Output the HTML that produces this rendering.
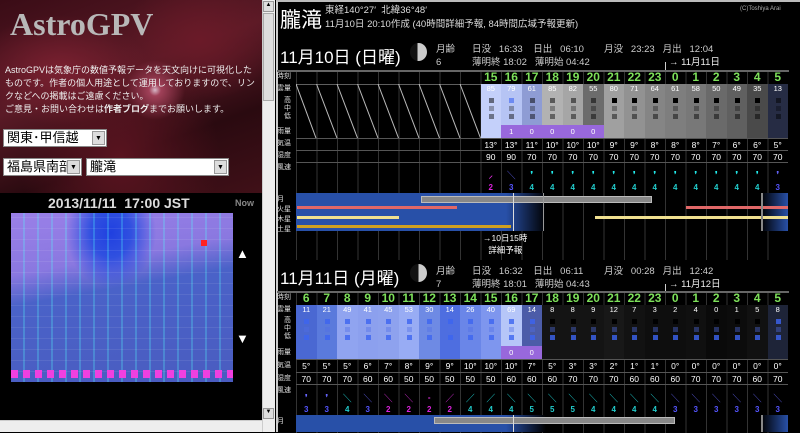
<!DOCTYPE html>
<html><head><meta charset="utf-8"><style>
*{margin:0;padding:0;box-sizing:border-box}
body{width:800px;height:432px;overflow:hidden;background:#000;font-family:"Liberation Sans","Noto Sans CJK JP",sans-serif;position:relative;color:#fff}
.a{position:absolute}
#left{left:0;top:0;width:262px;height:420px;background:#000;overflow:hidden}
#neb{left:0;top:0;width:262px;height:193px;background:radial-gradient(circle at 155px 90px,#d8b8c8 0,#a04058 6px,transparent 30px),radial-gradient(ellipse at 60px 70px,#7a2030 0,transparent 90px),radial-gradient(ellipse at 200px 40px,#6a1a28 0,transparent 80px),radial-gradient(ellipse at 120px 160px,#5a1420 0,transparent 100px),linear-gradient(160deg,#3a0c16,#5a1a26 40%,#2a0a10 70%,#401018)}
.sel{background:#fff;color:#000;font-size:13px;height:18px;border:1px solid #888;line-height:16px;padding-left:3px}
.sel b{position:absolute;right:1px;top:1px;width:13px;height:14px;background:#ddd;border:1px solid #999;font-size:7px;line-height:13px;text-align:center;font-weight:normal}
#right{left:276px;top:0;width:524px;height:432px;background:#000;border-left:2px solid #ccc;border-top:2px solid #bbb}
.lb{font-size:7px;color:#ddd;left:277px;line-height:8px}
.r{position:absolute;left:296px;display:flex}
.r span{width:20.5px;flex:none;text-align:center}
.h{font-size:12px;color:#7de05a;font-weight:bold;height:13px;line-height:13px}
.n{font-size:7.5px;color:#fff;line-height:9px}
.sm{font-size:8.5px;color:#fff}
.grid{left:296px;width:492px;background:repeating-linear-gradient(90deg,#333 0 1px,transparent 1px 20.5px)}
.hl{left:296px;width:492px;height:1px;background:#555}
.cl span{position:relative;height:41px}
.cl span i{position:absolute;left:8px;top:14px;width:5px;height:5px;background:rgba(0,0,0,.5);box-shadow:0 8px 0 rgba(0,0,0,.3),0 16px 0 rgba(0,0,0,.45)}
.bl span i{background:rgba(60,100,240,.8);box-shadow:0 8px 0 rgba(80,110,230,.4),0 16px 0 rgba(60,100,240,.8)}
.w span{height:10px;font-size:8px;font-weight:bold}
.t1{font-size:17px;color:#fff}
.inf{font-size:9.5px;color:#ccc;line-height:13px}
</style></head><body>
<div id="left" class="a">
 <div id="neb" class="a"></div>
 <div class="a" style="left:10px;top:6px;font-family:'Liberation Serif',serif;font-weight:bold;font-size:32px;color:#b8b8b8">AstroGPV</div>
 <div class="a" style="left:5px;top:64px;width:255px;font-size:9px;line-height:13px;color:#eee">AstroGPVは気象庁の数値予報データを天文向けに可視化したものです。作者の個人用途として運用しておりますので、リンクなどへの掲載はご遠慮ください。<br>ご意見・お問い合わせは<b>作者ブログ</b>までお願いします。</div>
 <div class="a sel" style="left:3px;top:129px;width:104px">関東･甲信越<b>▼</b></div>
 <div class="a sel" style="left:3px;top:158px;width:79px">福島県南部<b>▼</b></div>
 <div class="a sel" style="left:86px;top:158px;width:143px">朧滝<b>▼</b></div>
 <div class="a" style="left:0;top:193px;width:262px;height:227px;background:#000"></div>
 <div class="a" style="left:48px;top:195px;font-size:14px;font-weight:bold;color:#ddd">2013/11/11&nbsp; 17:00 JST</div>
 <div class="a" style="left:235px;top:198px;font-size:9px;color:#888;font-weight:bold">Now</div>
 <div class="a" style="left:11px;top:213px;width:222px;height:169px;background:radial-gradient(ellipse at 100px 20px,#2040e0 0,#3050e0 20px,transparent 45px),linear-gradient(170deg,#9a80e8 0,#8a78e0 30%,#4a62c8 45%,#4a5cc0 100%)"></div>
 <div class="a" style="left:11px;top:213px;width:222px;height:169px;background:repeating-linear-gradient(0deg,transparent 0 10px,rgba(255,255,255,.08) 10px 11px),repeating-linear-gradient(90deg,transparent 0 12px,rgba(80,255,255,.25) 12px 14px)"></div>
 <div class="a" style="left:11px;top:370px;width:222px;height:8px;background:repeating-linear-gradient(90deg,#f040e0 0 7px,transparent 7px 12px)"></div>
 <div class="a" style="left:201px;top:240px;width:6px;height:6px;background:#f22"></div>
 <div class="a" style="left:236px;top:246px;font-size:13px;color:#fff">▲</div>
 <div class="a" style="left:236px;top:331px;font-size:13px;color:#fff">▼</div>
</div>
<div class="a" style="left:262px;top:0;width:13px;height:432px;background:#eee;border-left:1px solid #ccc"></div>
<div class="a" style="left:263px;top:1px;width:11px;height:11px;background:#ddd;border:1px solid #999;font-size:6px;text-align:center;color:#000">▲</div>
<div class="a" style="left:263px;top:13px;width:11px;height:88px;background:#ddd;border:1px solid #aaa"></div>
<div class="a" style="left:263px;top:408px;width:11px;height:11px;background:#ddd;border:1px solid #999;font-size:6px;text-align:center;color:#000">▼</div>
<div class="a" style="left:0;top:420px;width:262px;height:12px;background:#eee;border-top:1px solid #ccc"></div>

<div id="right" class="a"></div>
<div class="a" style="left:280px;top:4px;font-size:21px">朧滝</div>
<div class="a inf" style="left:325px;top:4px;color:#ddd">東経140°27′&nbsp; 北緯36°48′</div>
<div class="a inf" style="left:325px;top:18px;color:#ddd">11月10日 20:10作成 (40時間詳細予報, 84時間広域予報更新)</div>
<div class="a" style="left:740px;top:6px;font-size:6px;color:#aaa">(C)Toshiya Arai</div>

<!-- day 1 header -->
<div class="a t1" style="left:280px;top:43px">11月10日 (日曜)</div>
<div class="a" style="left:410px;top:43px;width:17px;height:18px;border-radius:50%;background:linear-gradient(90deg,#111 45%,#ccc 45%)"></div>
<div class="a inf" style="left:436px;top:43px">月齢<br>6</div>
<div class="a inf" style="left:472px;top:43px">日没&nbsp;&nbsp; 16:33&nbsp;&nbsp;&nbsp; 日出&nbsp;&nbsp; 06:10<br>薄明終 18:02&nbsp;&nbsp; 薄明始 04:42</div>
<div class="a inf" style="left:604px;top:43px">月没&nbsp;&nbsp; 23:23&nbsp;&nbsp; 月出&nbsp;&nbsp; 12:04</div>
<div class="a inf" style="left:669px;top:56px;color:#eee">→ 11月11日</div>
<div class="a" style="left:665px;top:62px;width:1px;height:8px;background:#ccc"></div>
<div class="a hl" style="top:70px;left:277px;width:512px;height:2px;background:#666"></div>
<div class="a grid" style="top:72px;height:188px"></div>
<div class="a lb" style="top:73px">時刻</div>
<div class="a lb" style="top:85px">雲量</div>
<div class="a lb" style="top:97px;left:284px">高<br>中<br>低</div>
<div class="a lb" style="top:128px">雨量</div>
<div class="a lb" style="top:140px">気温</div>
<div class="a lb" style="top:152px">湿度</div>
<div class="a lb" style="top:164px">風速</div>
<div class="a lb" style="top:195px;line-height:10px">月<br>火星<br>木星<br>土星</div>
<svg class="a" style="left:296px;top:84px" width="185" height="54"><g stroke="#bbb" stroke-width="1">
<line x1="0" y1="0" x2="20" y2="54"/><line x1="20.5" y1="0" x2="41" y2="54"/><line x1="41" y1="0" x2="61.5" y2="54"/><line x1="61.5" y1="0" x2="82" y2="54"/><line x1="82" y1="0" x2="102.5" y2="54"/><line x1="102.5" y1="0" x2="123" y2="54"/><line x1="123" y1="0" x2="143.5" y2="54"/><line x1="143.5" y1="0" x2="164" y2="54"/><line x1="164" y1="0" x2="184.5" y2="54"/>
<line x1="0" y1="0" x2="185" y2="0"/></g></svg>
<div class="r h" style="top:71px;left:480.5px"><span>15</span><span>16</span><span>17</span><span>18</span><span>19</span><span>20</span><span>21</span><span>22</span><span>23</span><span>0</span><span>1</span><span>2</span><span>3</span><span>4</span><span>5</span></div>
<div class="r cl n" style="top:84px;left:480.5px">
<span class="bl" style="background:#c4d0fa;height:54px">85<i></i></span><span style="background:#b6c4f4">79<i style="background:rgba(60,100,240,.6)"></i></span><span style="background:#8e9cd4">61<i></i></span><span style="background:#b2b2b2">85<i></i></span><span style="background:#a6a6a6">82<i></i></span><span style="background:#6c6c6c">55<i></i></span><span style="background:#a0a0a0;height:54px">80<i style="background:#000"></i></span><span style="background:#929292;height:54px">71<i style="background:#000"></i></span><span style="background:#858585;height:54px">64<i style="background:#000"></i></span><span style="background:#7e7e7e;height:54px">61<i style="background:#000"></i></span><span style="background:#787878;height:54px">58<i style="background:#000"></i></span><span style="background:#6a6a6a;height:54px">50<i style="background:#000"></i></span><span style="background:#606060;height:54px">49<i style="background:#000"></i></span><span style="background:#4a4a4a;height:54px">35<i style="background:#000"></i></span><span style="background:#262c44;height:54px">13<i></i></span></div>
<div class="r n" style="top:125px;left:501px;height:13px;line-height:13px"><span style="background:#9868dc">1</span><span style="background:#9868dc">0</span><span style="background:#9868dc">0</span><span style="background:#9868dc">0</span><span style="background:#9868dc">0</span></div>
<div class="a hl" style="top:138px"></div>
<div class="r sm" style="top:140px;left:480.5px"><span>13°</span><span>13°</span><span>11°</span><span>10°</span><span>10°</span><span>10°</span><span>9°</span><span>9°</span><span>8°</span><span>8°</span><span>8°</span><span>7°</span><span>6°</span><span>6°</span><span>5°</span></div>
<div class="a hl" style="top:150px"></div>
<div class="r sm" style="top:152px;left:480.5px"><span>90</span><span>90</span><span>70</span><span>70</span><span>70</span><span>70</span><span>70</span><span>70</span><span>70</span><span>70</span><span>70</span><span>70</span><span>70</span><span>70</span><span>70</span></div>
<div class="a hl" style="top:162px"></div>
<div class="r w" style="top:170px;left:480.5px;color:#2ee"><span style="color:#e3e">⸝</span><span style="color:#66f">╲</span><span>❜</span><span>❜</span><span>❜</span><span>❜</span><span>❜</span><span>❜</span><span>❜</span><span>❜</span><span>❜</span><span>❜</span><span>❜</span><span>❜</span><span style="color:#66f">❜</span></div>
<div class="r w" style="top:183px;left:480.5px;color:#2cc"><span style="color:#d2d">2</span><span style="color:#55f">3</span><span>4</span><span>4</span><span>4</span><span>4</span><span>4</span><span>4</span><span>4</span><span>4</span><span>4</span><span>4</span><span>4</span><span>4</span><span style="color:#55f">3</span></div>
<!-- planets day1 -->
<div class="a" style="left:296px;top:193px;width:250px;height:38px;background:linear-gradient(90deg,#2850a8 0,#2850a8 210px,#000 250px)"></div>
<div class="a" style="left:761px;top:193px;width:27px;height:38px;background:linear-gradient(90deg,#000,#2850a8)"></div>
<div class="a" style="left:421px;top:196px;width:231px;height:7px;background:#888;border:1px solid #bbb"></div>
<div class="a" style="left:297px;top:206px;width:160px;height:3px;background:#e06868"></div>
<div class="a" style="left:686px;top:206px;width:102px;height:3px;background:#e06868"></div>
<div class="a" style="left:297px;top:216px;width:102px;height:3px;background:#f0e090"></div>
<div class="a" style="left:595px;top:216px;width:193px;height:3px;background:#f0e090"></div>
<div class="a" style="left:297px;top:225px;width:214px;height:3px;background:#d0a020"></div>
<div class="a" style="left:513px;top:193px;width:1px;height:38px;background:#ddd"></div>
<div class="a" style="left:543px;top:193px;width:1px;height:38px;background:#999"></div>
<div class="a" style="left:761px;top:193px;width:2px;height:38px;background:#888"></div>
<div class="a sm" style="left:483px;top:232px;line-height:12px;text-align:center">→10日15時<br>詳細予報</div>

<!-- day 2 -->
<div class="a" style="left:278px;top:260px;width:522px;height:30px;background:#000"></div>
<div class="a t1" style="left:280px;top:264px">11月11日 (月曜)</div>
<div class="a" style="left:410px;top:264px;width:17px;height:18px;border-radius:50%;background:linear-gradient(90deg,#111 50%,#ccc 50%)"></div>
<div class="a inf" style="left:436px;top:265px">月齢<br>7</div>
<div class="a inf" style="left:472px;top:265px">日没&nbsp;&nbsp; 16:32&nbsp;&nbsp;&nbsp; 日出&nbsp;&nbsp; 06:11<br>薄明終 18:01&nbsp;&nbsp; 薄明始 04:43</div>
<div class="a inf" style="left:604px;top:265px">月没&nbsp;&nbsp; 00:28&nbsp;&nbsp; 月出&nbsp;&nbsp; 12:42</div>
<div class="a inf" style="left:669px;top:278px;color:#eee">→ 11月12日</div>
<div class="a" style="left:665px;top:284px;width:1px;height:8px;background:#ccc"></div>
<div class="a hl" style="top:291px;left:277px;width:512px;height:2px;background:#666"></div>
<div class="a grid" style="top:293px;height:140px"></div>
<div class="a lb" style="top:294px">時刻</div>
<div class="a lb" style="top:306px">雲量</div>
<div class="a lb" style="top:317px;left:284px">高<br>中<br>低</div>
<div class="a lb" style="top:349px">雨量</div>
<div class="a lb" style="top:362px">気温</div>
<div class="a lb" style="top:375px">湿度</div>
<div class="a lb" style="top:387px">風速</div>
<div class="a lb" style="top:418px">月</div>
<div class="r h" style="top:292px"><span>6</span><span>7</span><span>8</span><span>9</span><span>10</span><span>11</span><span>12</span><span>13</span><span>14</span><span>15</span><span>16</span><span>17</span><span>18</span><span>19</span><span>20</span><span>21</span><span>22</span><span>23</span><span>0</span><span>1</span><span>2</span><span>3</span><span>4</span><span>5</span></div>
<div class="r cl bl n" style="top:305px">
<span style="background:#4a68d2;height:54px">11<i></i></span><span style="background:#5a7adc;height:54px">21<i></i></span><span style="background:#90a4f0;height:54px">49<i></i></span><span style="background:#8ca0ee;height:54px">41<i></i></span><span style="background:#8ea2ee;height:54px">45<i></i></span><span style="background:#98acf4;height:54px">53<i></i></span><span style="background:#6e8ae4;height:54px">30<i></i></span><span style="background:#4e6ee0;height:54px">14<i></i></span><span style="background:#6a86e8;height:54px">26<i></i></span><span style="background:#7e96ee;height:54px">40<i></i></span><span style="background:#b6c6f8">69<i></i></span><span style="background:#4c5ca8">14<i></i></span><span style="background:#141414;height:54px">8<i style="background:#000"></i></span><span style="background:#141414;height:54px">8<i style="background:#000"></i></span><span style="background:#141414;height:54px">9<i style="background:#000"></i></span><span style="background:#181818;height:54px">12<i style="background:#000"></i></span><span style="background:#121212;height:54px">7<i style="background:#000"></i></span><span style="background:#0e0e0e;height:54px">3<i style="background:#000"></i></span><span style="background:#0e0e0e;height:54px">2<i style="background:#000"></i></span><span style="background:#101010;height:54px">4<i style="background:#000"></i></span><span style="background:#0a0a0a;height:54px">0<i style="background:#000"></i></span><span style="background:#0c0c0c;height:54px">1<i style="background:#000"></i></span><span style="background:#111;height:54px">5<i style="background:#000"></i></span><span style="background:#1e2438;height:54px">8<i></i></span></div>
<div class="r n" style="top:346px;left:501px;height:13px;line-height:13px"><span style="background:#9868dc">0</span><span style="background:#9868dc">0</span></div>
<div class="a hl" style="top:359px"></div>
<div class="r sm" style="top:361px"><span>5°</span><span>5°</span><span>5°</span><span>6°</span><span>7°</span><span>8°</span><span>9°</span><span>9°</span><span>10°</span><span>10°</span><span>10°</span><span>7°</span><span>5°</span><span>3°</span><span>3°</span><span>2°</span><span>1°</span><span>1°</span><span>0°</span><span>0°</span><span>0°</span><span>0°</span><span>0°</span><span>0°</span></div>
<div class="a hl" style="top:372px"></div>
<div class="r sm" style="top:374px"><span>70</span><span>70</span><span>70</span><span>60</span><span>60</span><span>50</span><span>50</span><span>50</span><span>50</span><span>50</span><span>60</span><span>60</span><span>60</span><span>70</span><span>70</span><span>70</span><span>60</span><span>60</span><span>60</span><span>70</span><span>70</span><span>70</span><span>60</span><span>70</span></div>
<div class="a hl" style="top:384px"></div>
<div class="r w" style="top:393px;color:#2ee"><span style="color:#66f">❜</span><span style="color:#66f">❜</span><span>╲</span><span style="color:#66f">╲</span><span style="color:#e3e">╲</span><span style="color:#e3e">╲</span><span style="color:#e3e">-</span><span style="color:#e3e">╱</span><span>╱</span><span>╱</span><span>╲</span><span>╲</span><span>╲</span><span>╲</span><span>╲</span><span>╲</span><span>╲</span><span>╲</span><span style="color:#66f">╲</span><span style="color:#66f">╲</span><span style="color:#66f">╲</span><span style="color:#66f">╲</span><span style="color:#66f">╲</span><span style="color:#66f">╲</span></div>
<div class="r w" style="top:405px;color:#2cc"><span style="color:#55f">3</span><span style="color:#55f">3</span><span>4</span><span style="color:#55f">3</span><span style="color:#d2d">2</span><span style="color:#d2d">2</span><span style="color:#d2d">2</span><span style="color:#d2d">2</span><span>4</span><span>4</span><span>4</span><span>5</span><span>5</span><span>5</span><span>4</span><span>4</span><span>4</span><span>4</span><span style="color:#55f">3</span><span style="color:#55f">3</span><span style="color:#55f">3</span><span style="color:#55f">3</span><span style="color:#55f">3</span><span style="color:#55f">3</span></div>
<div class="a" style="left:296px;top:415px;width:250px;height:17px;background:linear-gradient(90deg,#2850a8 0,#2850a8 210px,#000 250px)"></div>
<div class="a" style="left:761px;top:415px;width:27px;height:17px;background:linear-gradient(90deg,#000,#2850a8)"></div>
<div class="a" style="left:434px;top:417px;width:241px;height:7px;background:#888;border:1px solid #bbb"></div>
<div class="a" style="left:513px;top:415px;width:1px;height:17px;background:#ddd"></div>
<div class="a" style="left:761px;top:415px;width:2px;height:17px;background:#888"></div>
</body></html>
